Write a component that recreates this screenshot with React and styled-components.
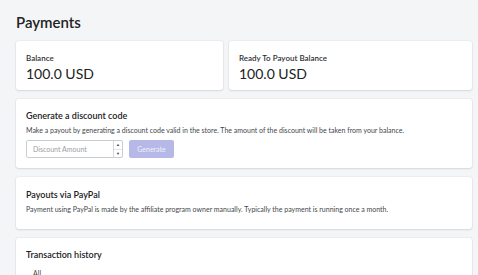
import React from "react";
import styled, { createGlobalStyle } from "styled-components";

const Global = createGlobalStyle`
  html, body { margin: 0; padding: 0; background: #f4f5f7; }
  body { font-family: Lato, "Open Sans", sans-serif; color: #202223; }
  * { box-sizing: border-box; }
`;

const Page = styled.div`
  padding: 13px 6px 0 16px;
  display: flex;
  flex-direction: column;
`;

const Title = styled.h1`
  margin: 0 0 10px;
  font-size: 15px;
  font-weight: 600;
  line-height: 18px;
  color: #202223;
`;

const Row = styled.div`
  display: grid;
  grid-template-columns: 207px 1fr;
  gap: 6px;
`;

const Card = styled.section`
  background: #fff;
  border-radius: 3px;
  box-shadow: 0 0 0 1px rgba(63, 63, 68, 0.04), 0 1px 2px rgba(63, 63, 68, 0.12);
  padding: ${(p) => p.$pad || "12px 10px"};
  height: ${(p) => (p.$h ? p.$h + "px" : "auto")};
  margin-bottom: ${(p) => (p.$mb != null ? p.$mb : 9)}px;
`;

const Label = styled.div`
  font-size: 8px;
  line-height: 10px;
  color: #303235;
  font-weight: 600;
`;

const Value = styled.div`
  font-size: 14px;
  line-height: 18px;
  margin-top: 2px;
  color: #202223;
`;

const CardTitle = styled.h2`
  margin: 0;
  font-size: 9px;
  line-height: 12px;
  font-weight: 600;
  color: #202223;
`;

const Desc = styled.p`
  margin: 3px 0 0;
  font-size: 7px;
  line-height: 10px;
  color: #44474a;
`;

const Form = styled.div`
  display: flex;
  gap: 6px;
  margin-top: 5px;
`;

const NumberBox = styled.div`
  display: flex;
  width: 97px;
  height: 18px;
  border: 1px solid #c9ccd0;
  border-radius: 2px;
  background: #fff;
`;

const NumberInput = styled.input`
  flex: 1;
  min-width: 0;
  border: 0;
  outline: 0;
  padding: 0 0 0 6px;
  font-family: inherit;
  font-size: 7px;
  color: #202223;
  &::placeholder { color: #9a9ea3; }
`;

const Spinner = styled.div`
  width: 9px;
  border-left: 1px solid #d5d8db;
  display: flex;
  flex-direction: column;
`;

const SpinBtn = styled.div`
  flex: 1;
  display: flex;
  align-items: center;
  justify-content: center;
  font-size: 4px;
  color: #444;
  & + & { border-top: 1px solid #e1e3e5; }
`;

const Button = styled.button`
  width: 45px;
  height: 18px;
  border: 0;
  border-radius: 2px;
  background: #b6b9e8;
  color: #eef0fb;
  font-family: inherit;
  font-size: 7px;
  padding: 0;
`;

const History = styled.div`
  font-size: 7px;
  line-height: 10px;
  color: #44474a;
  margin: 7px 0 0 7px;
`;

export default function App() {
  return (
    <>
      <Global />
      <Page>
        <Title>Payments</Title>
        <Row>
          <Card $pad="12px 10px" $h={49}>
            <Label>Balance</Label>
            <Value>100.0 USD</Value>
          </Card>
          <Card $pad="12px 10px" $h={49}>
            <Label>Ready To Payout Balance</Label>
            <Value>100.0 USD</Value>
          </Card>
        </Row>
        <Card $pad="11px 10px" $h={69}>
          <CardTitle>Generate a discount code</CardTitle>
          <Desc>
            Make a payout by generating a discount code valid in the store. The amount of the discount will be taken from your balance.
          </Desc>
          <Form>
            <NumberBox>
              <NumberInput placeholder="Discount Amount" />
              <Spinner>
                <SpinBtn>▲</SpinBtn>
                <SpinBtn>▼</SpinBtn>
              </Spinner>
            </NumberBox>
            <Button>Generate</Button>
          </Form>
        </Card>
        <Card $pad="12px 10px" $h={52}>
          <CardTitle>Payouts via PayPal</CardTitle>
          <Desc>
            Payment using PayPal is made by the affiliate program owner manually. Typically the payment is running once a month.
          </Desc>
        </Card>
        <Card $pad="11px 10px" $h={60} $mb={0}>
          <CardTitle>Transaction history</CardTitle>
          <History>All</History>
        </Card>
      </Page>
    </>
  );
}
